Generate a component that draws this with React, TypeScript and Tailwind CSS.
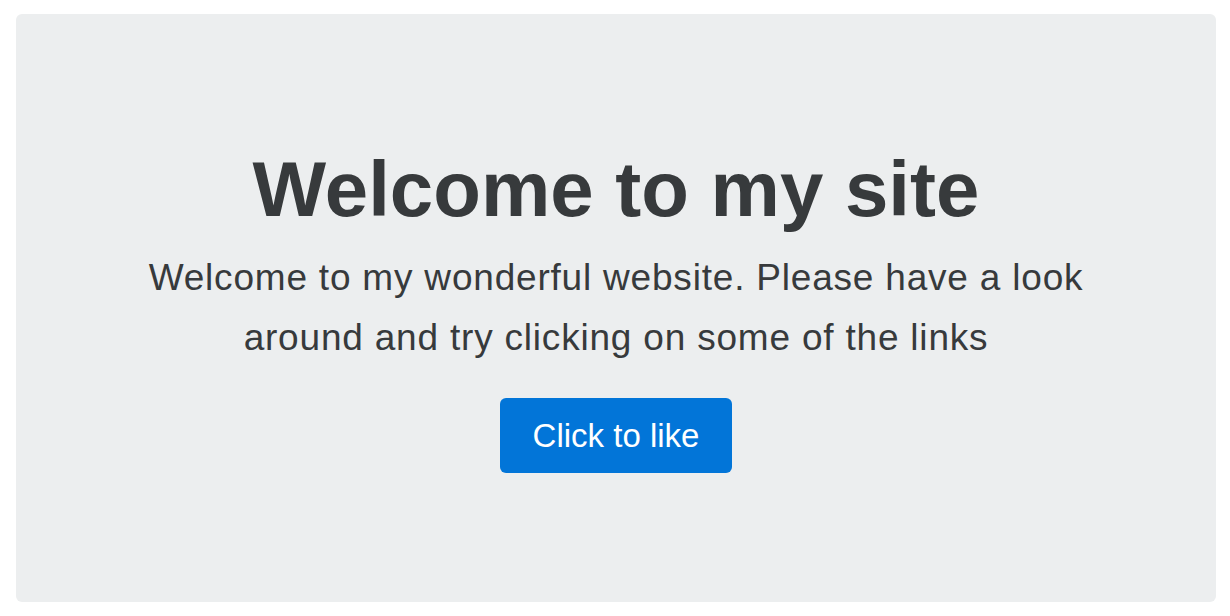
import React from 'react';

const App: React.FC = () => {
  return (
    <div className="min-h-screen bg-white pt-[14px] pl-4 pr-[14px]" style={{ fontFamily: '"Liberation Sans", Arial, sans-serif' }}>
      <div className="h-[588px] rounded-md bg-[#eceeef] pt-[131px] flex flex-col items-center text-center text-[#373a3c]">
        <h1 className="text-[78px] leading-[88px] font-bold">Welcome to my site</h1>
        <p className="mt-[15px] w-[980px] text-[37px] leading-[60px] tracking-[0.8px]">
          Welcome to my wonderful website. Please have a look around and try clicking on some of the links
        </p>
        <button
          className="mt-[30px] w-[232px] h-[75px] rounded-md bg-[#0275d8] text-white text-[33px]"
          type="button"
        >
          Click to like
        </button>
      </div>
    </div>
  );
};

export default App;
